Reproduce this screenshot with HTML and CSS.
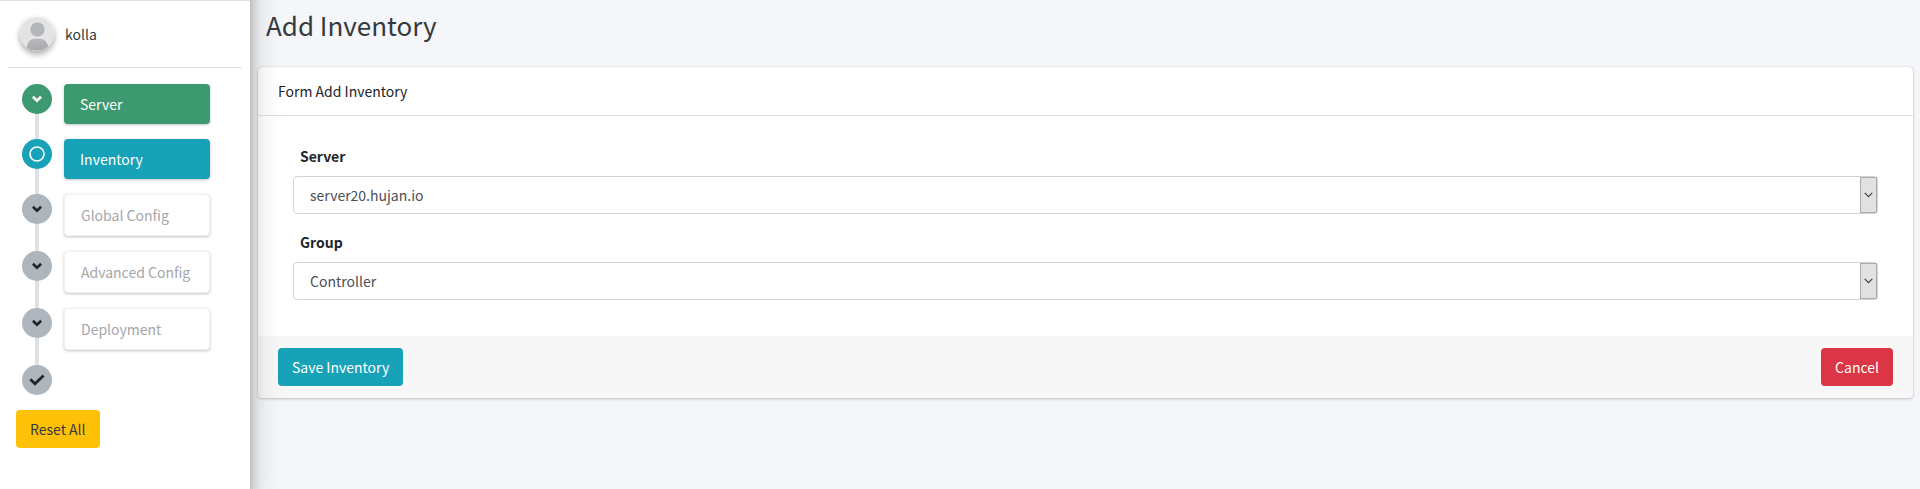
FILE: index.html
```html
<!DOCTYPE html>
<html lang="en">
<head>
<meta charset="utf-8">
<title>Add Inventory</title>
<link rel="stylesheet" href="styles.css">
</head>
<body>
<svg class="defs" aria-hidden="true">
  <symbol id="chevron" viewBox="0 0 10 8"><path d="M.9 1.8 L5 5.700 L9.100 1.8" fill="none" stroke="currentColor" stroke-width="2.6"/></symbol>
  <symbol id="ring" viewBox="0 0 16 16"><circle cx="8" cy="8" r="7" fill="none" stroke="currentColor" stroke-width="1.6"/></symbol>
  <symbol id="check" viewBox="0 0 16 12"><path d="M1.3 5.2 L6 9.8 L14.6 1.4" fill="none" stroke="currentColor" stroke-width="2.8"/></symbol>
  <symbol id="caret" viewBox="0 0 9 6"><path d="M.7 .8 L4.5 4.6 L8.3 .8" fill="none" stroke="currentColor" stroke-width="1.2"/></symbol>
</svg>
<div class="app">
  <aside class="sidebar">
    <div class="user">
      <svg class="avatar" viewBox="0 0 34 34" aria-hidden="true">
        <defs>
          <clipPath id="round"><circle cx="17" cy="17" r="17"/></clipPath>
          <linearGradient id="person" x1="0" y1="0" x2="0" y2="1"><stop offset="0" stop-color="#b9babd"/><stop offset="1" stop-color="#a7a8ab"/></linearGradient>
        </defs>
        <g clip-path="url(#round)">
          <rect width="34" height="34" fill="#e1e3e5"/>
          <circle cx="17.500" cy="12.500" r="7.800" fill="#b5b6b9" stroke="#eeeff0" stroke-width="1"/>
          <path d="M6 34 V31 C7 24 11 21 15 21 H20 C24 21 28 24 29 31 V34 Z" fill="url(#person)" stroke="#eeeff0" stroke-width="1"/>
        </g>
      </svg>
      <a class="user-name" href="#">kolla</a>
    </div>
    <ol class="steps">
      <li class="step done"><span class="dot"><svg class="chevron"><use href="#chevron"/></svg></span><a class="step-link" href="#">Server</a></li>
      <li class="step current"><span class="dot"><svg class="ring"><use href="#ring"/></svg></span><a class="step-link" href="#">Inventory</a></li>
      <li class="step"><span class="dot"><svg class="chevron"><use href="#chevron"/></svg></span><button class="step-link" type="button" disabled>Global Config</button></li>
      <li class="step"><span class="dot"><svg class="chevron"><use href="#chevron"/></svg></span><button class="step-link" type="button" disabled>Advanced Config</button></li>
      <li class="step"><span class="dot"><svg class="chevron"><use href="#chevron"/></svg></span><button class="step-link" type="button" disabled>Deployment</button></li>
      <li class="step"><span class="dot"><svg class="check"><use href="#check"/></svg></span></li>
    </ol>
    <button class="btn warning" type="button">Reset All</button>
  </aside>
  <main class="content">
    <h1 class="title">Add Inventory</h1>
    <form class="card">
      <h2 class="card-header">Form Add Inventory</h2>
      <div class="card-body">
        <div class="field">
          <label class="label" for="server">Server</label>
          <div class="select-box">
            <select class="select" id="server"><option>server20.hujan.io</option></select>
            <span class="select-arrow"><svg class="caret" aria-hidden="true"><use href="#caret"/></svg></span>
          </div>
        </div>
        <div class="field">
          <label class="label" for="group">Group</label>
          <div class="select-box">
            <select class="select" id="group"><option>Controller</option></select>
            <span class="select-arrow"><svg class="caret" aria-hidden="true"><use href="#caret"/></svg></span>
          </div>
        </div>
      </div>
      <div class="card-footer">
        <button class="btn info" type="button">Save Inventory</button>
        <button class="btn danger" type="button">Cancel</button>
      </div>
    </form>
  </main>
</div>
</body>
</html>
```
FILE: styles.css
```css
* { box-sizing: border-box; }

body {
  margin: 0;
  overflow: hidden;
  background: #f4f6f9;
  color: #212529;
  font-family: "Source Sans Pro", "Noto Sans CJK SC", sans-serif;
  font-size: 14px;
  line-height: 24px;
}

button, select { font: inherit; }
a { color: inherit; text-decoration: none; }
.defs { position: absolute; width: 0; height: 0; }

.app { display: flex; min-height: 100vh; }

/* The sidebar starts above the window so that its shadow has no top end. */
.sidebar {
  position: relative;
  z-index: 1;
  flex: 0 0 250px;
  margin-top: -56px;
  padding: 56px 8px 0;
  background: #fff;
  box-shadow: 0 14px 28px rgba(0, 0, 0, .25), 0 10px 10px rgba(0, 0, 0, .22);
}
.sidebar::before {
  content: "";
  display: block;
  margin: 0 -8px;
  height: 1px;
  background: #dee2e6;
}

.user {
  display: flex;
  align-items: center;
  gap: 11px;
  height: 67px;
  padding-left: 12px;
  border-bottom: 1px solid #dee2e6;
  color: #343a40;
}
.avatar {
  width: 34px;
  height: 34px;
  border-radius: 50%;
  box-shadow: 0 3px 6px rgba(0, 0, 0, .16), 0 3px 6px rgba(0, 0, 0, .23);
}

.steps { margin: 0; padding: 16px 0 0 14px; list-style: none; }
.step {
  position: relative;
  display: flex;
  align-items: flex-start;
  gap: 12px;
  padding-bottom: 15px;
}
.step:not(:last-child)::before {
  content: "";
  position: absolute;
  left: 13px;
  top: 0;
  bottom: 0;
  width: 4px;
  background: #dee2e6;
}
.dot {
  position: relative;
  display: flex;
  align-items: center;
  justify-content: center;
  width: 30px;
  height: 30px;
  padding: 0 1px 1px 0;
  border-radius: 50%;
  background: #adb5bd;
}
.chevron { width: 10px; height: 8px; }
.ring { width: 16px; height: 16px; }
.check { width: 16px; height: 12px; }
.step-link {
  width: 146px;
  padding: 8px 16px;
  border: 1px solid #f1f1f1;
  border-radius: 4px;
  background: #fff;
  color: #a3a7ab;
  text-align: left;
  white-space: nowrap;
  box-shadow: 0 1px 3px rgba(0, 0, 0, .24);
}
.done .dot, .done .step-link { background: #3d9970; color: #fff; }
.current .dot, .current .step-link { background: #17a2b8; color: #fff; }
.done .step-link, .current .step-link { border: 0; }

.btn {
  padding: 6px 13px;
  border: 1px solid transparent;
  border-radius: 4px;
  color: #fff;
}
.warning { margin-left: 8px; background: #ffc107; color: #343a40; }
.info { background: #17a2b8; }
.danger { background: #dc3545; }

.content { flex: 1; min-width: 0; padding: 7px 7px 0 8px; }
.title {
  margin: 0 0 24px;
  padding-left: 8px;
  color: #343a40;
  font-size: 26px;
  font-weight: 400;
  line-height: 36px;
}
.card {
  overflow: hidden;
  border-radius: 4px;
  background: #fff;
  box-shadow: 0 0 1px rgba(0, 0, 0, .3), 0 1px 3px rgba(0, 0, 0, .2);
}
.card-header {
  margin: 0;
  padding: 12px 20px;
  border-bottom: 1px solid #dfdfdf;
  font-size: 14px;
  font-weight: 400;
  line-height: 24px;
}
.card-body {
  display: grid;
  gap: 16px;
  padding: 28px 35px 36px;
}
.label { display: block; margin: 0 0 8px 7px; font-weight: 700; }
.select-box { position: relative; }
.select {
  display: block;
  width: 100%;
  height: 38px;
  padding: 0 24px 0 16px;
  border: 1px solid #ced4da;
  border-radius: 4px;
  background: #fff;
  color: #495057;
  appearance: none;
}
.select-arrow {
  position: absolute;
  top: 1px;
  right: 1px;
  bottom: 1px;
  display: grid;
  place-items: center;
  width: 17px;
  border: 1px solid #adadad;
  background: #e1e1e1;
  color: #404040;
  pointer-events: none;
}
.caret { width: 9px; height: 6px; }
.card-footer {
  display: flex;
  justify-content: space-between;
  padding: 12px 20px;
  background: #f7f7f7;
}
```
